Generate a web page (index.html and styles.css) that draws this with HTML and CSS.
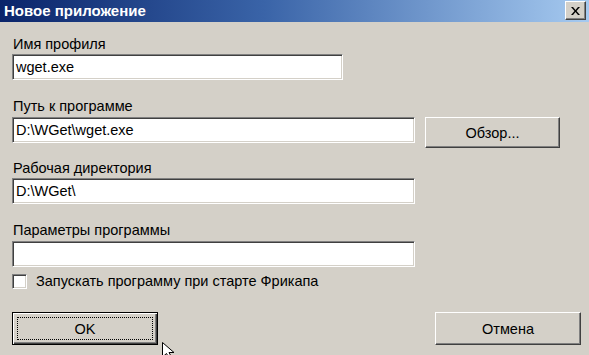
FILE: index.html
```html
<!DOCTYPE html>
<html lang="ru">
<head>
<meta charset="utf-8">
<title>Новое приложение</title>
<link rel="stylesheet" href="styles.css">
</head>
<body>
<div class="window">
  <div class="titlebar">
    <span class="title">Новое приложение</span>
    <span class="close-btn">
      <svg width="9" height="8" viewBox="0 0 9 8"><path d="M0 0h2l2.5 3 2.5-3h2L5.5 4 9 8H7L4.5 5 2 8H0l3.5-4z" fill="#000"/></svg>
    </span>
  </div>
  <div class="content">
    <div class="group g1">
      <div class="label">Имя профиля</div>
      <div class="field short">wget.exe</div>
    </div>
    <div class="group g2">
      <div class="label">Путь к программе</div>
      <div class="row">
        <div class="field long">D:\WGet\wget.exe</div>
        <div class="btn browse">Обзор...</div>
      </div>
    </div>
    <div class="group g3">
      <div class="label">Рабочая директория</div>
      <div class="field long">D:\WGet\</div>
    </div>
    <div class="group g4">
      <div class="label">Параметры программы</div>
      <div class="field long"></div>
    </div>
    <div class="check-row">
      <span class="checkbox"></span>
      <span class="check-label">Запускать программу при старте Фрикапа</span>
    </div>
    <div class="buttons">
      <div class="btn default"><span class="focus">OK</span></div>
      <div class="btn cancel">Отмена</div>
    </div>
  </div>
  <svg class="cursor" width="16" height="16" viewBox="0 0 16 16"><path d="M0.5 0.5 L0.5 15 L4.5 11.5 L7 16 L9.5 15 L7 10.5 L12 10.5 Z" fill="#fff" stroke="#000" stroke-width="1"/></svg>
</div>
</body>
</html>
```

FILE: styles.css
```css
html, body {
  margin: 0;
  padding: 0;
  background: #d4d0c8;
}
.window {
  position: relative;
  width: 589px;
  height: 355px;
  overflow: hidden;
  background: #d4d0c8;
  font-family: "Liberation Sans", Arial, sans-serif;
  font-size: 14.5px;
  color: #000;
}
.titlebar {
  height: 22px;
  background: linear-gradient(to right, #0a246a 0%, #3a64a8 45%, #a6caf0 100%);
  display: flex;
  align-items: center;
  justify-content: space-between;
  padding: 0 3px 0 4px;
  box-sizing: border-box;
}
.title {
  color: #fff;
  font-weight: bold;
  font-size: 15px;
  line-height: 22px;
}
.close-btn {
  width: 21px;
  height: 19px;
  box-sizing: border-box;
  background: #d4d0c8;
  border-top: 1px solid #fff;
  border-left: 1px solid #fff;
  border-right: 1px solid #404040;
  border-bottom: 1px solid #404040;
  box-shadow: inset -1px -1px 0 #808080;
  display: flex;
  align-items: center;
  justify-content: center;
  margin-top: -1px;
}
.content {
  padding: 14px 0 0 12px;
  display: flex;
  flex-direction: column;
}
.label {
  line-height: 16px;
  height: 16px;
  padding-left: 1px;
  white-space: nowrap;
}
.g1 .label { margin-bottom: 2px; }
.g2 { margin-top: 18px; }
.g2 .label { margin-bottom: 3px; }
.g3 { margin-top: 12px; }
.g3 .label { margin-bottom: 2px; }
.g4 { margin-top: 18px; }
.g4 .label { margin-bottom: 3px; }
.field {
  height: 26px;
  box-sizing: border-box;
  background: #fff;
  border-top: 1px solid #808080;
  border-left: 1px solid #808080;
  border-right: 1px solid #fff;
  border-bottom: 1px solid #fff;
  box-shadow: inset 1px 1px 0 #404040, inset -1px -1px 0 #d4d0c8;
  padding: 0 3px;
  line-height: 24px;
  white-space: nowrap;
}
.short { width: 331px; }
.long { width: 403px; }
.row {
  display: flex;
  align-items: flex-start;
  gap: 10px;
}
.btn {
  box-sizing: border-box;
  background: #d4d0c8;
  border-top: 1px solid #fff;
  border-left: 1px solid #fff;
  border-right: 1px solid #404040;
  border-bottom: 1px solid #404040;
  box-shadow: inset -1px -1px 0 #808080;
  display: flex;
  align-items: center;
  justify-content: center;
  white-space: nowrap;
}
.browse {
  width: 135px;
  height: 31px;
}
.check-row {
  margin-top: 6px;
  height: 16px;
  display: flex;
  align-items: center;
  gap: 9px;
}
.checkbox {
  width: 15px;
  height: 15px;
  box-sizing: border-box;
  background: #fff;
  border-top: 1px solid #808080;
  border-left: 1px solid #808080;
  border-right: 1px solid #fff;
  border-bottom: 1px solid #fff;
  box-shadow: inset 1px 1px 0 #404040, inset -1px -1px 0 #d4d0c8;
}
.check-label {
  line-height: 16px;
}
.buttons {
  margin-top: 23px;
  display: flex;
  justify-content: space-between;
  padding-right: 8px;
}
.buttons .btn {
  width: 146px;
  height: 33px;
}
.btn.default {
  border: 1px solid #000;
  box-shadow: inset 1px 1px 0 #fff, inset -1px -1px 0 #404040, inset -2px -2px 0 #808080;
  padding: 4px;
}
.focus {
  flex: 1;
  align-self: stretch;
  border: 1px dotted #000;
  display: flex;
  align-items: center;
  justify-content: center;
}
.cursor {
  position: absolute;
  left: 162px;
  top: 342px;
}
```
